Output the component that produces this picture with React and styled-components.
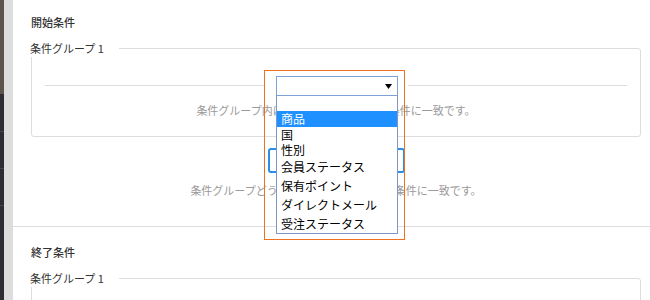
import React from "react";
import styled, { createGlobalStyle } from "styled-components";

const Global = createGlobalStyle`
  html, body { margin: 0; padding: 0; background: #fff; overflow: hidden; }
  body { font-family: "Noto Sans CJK JP", "Noto Sans", sans-serif; color: #333; }
  * { box-sizing: border-box; }
`;

const Shell = styled.div`
  display: flex;
  width: 650px;
  height: 300px;
  overflow: hidden;
`;

const Rail = styled.div`
  width: 4px;
  flex: none;
  display: flex;
  flex-direction: column;
  background: #2e2d33;
`;

const RailBlock = styled.div`
  flex: none;
  height: ${(p) => p.$h}px;
  background: ${(p) => (p.$brand ? "#5d544c" : "#2e2d33")};
  border-bottom: 1px solid ${(p) => (p.$brand ? "#5d544c" : "#46454c")};
`;

const Gutter = styled.div`
  width: 9px;
  flex: none;
  background: #dddddd;
`;

const Main = styled.main`
  flex: 1;
  background: #fff;
  display: flex;
  flex-direction: column;
`;

const Section = styled.section`
  position: relative;
  padding: ${(p) => p.$pt}px 9px ${(p) => p.$pb}px 18px;
  border-bottom: ${(p) => (p.$divided ? "1px solid #dddddd" : "none")};
`;

const Title = styled.h3`
  margin: 0;
  font-size: 11px;
  line-height: 16px;
  font-weight: 500;
  color: #333;
`;

const Group = styled.div`
  position: relative;
  margin-top: 18px;
  border: 1px solid #dddddd;
  border-radius: 3px;
  padding: 0 13px ${(p) => p.$pb}px;
  min-height: ${(p) => p.$minH || 0}px;
`;

const Legend = styled.span`
  position: absolute;
  top: -10px;
  left: -2px;
  font-size: 11px;
  line-height: 18px;
  color: #333;
  background: #fff;
  padding-right: 15px;
`;

const DividerRow = styled.div`
  display: flex;
  align-items: center;
  margin-top: 36px;
`;

const Rule = styled.div`
  flex: 1;
  height: 1px;
  background: #dddddd;
`;

const RuleSlot = styled.div`
  width: 143px;
  height: 1px;
  flex: none;
`;

const Note = styled.p`
  margin: ${(p) => p.$mt}px 0 0;
  text-align: center;
  font-size: 11px;
  line-height: 16px;
  color: #9a9a9a;
  white-space: nowrap;
`;

const ChoiceSlot = styled.span`
  display: inline-block;
  width: ${(p) => p.$w}px;
  height: 1px;
  vertical-align: middle;
`;

const AddButton = styled.button`
  display: block;
  margin: 11px auto 0;
  width: 137px;
  height: 25px;
  border: 2px solid #2a8ee6;
  border-radius: 3px;
  background: #fff;
  padding: 0;
`;

const Popup = styled.div`
  position: absolute;
  left: 251px;
  top: 70px;
  width: 141px;
  height: 170px;
  border: 1px solid #f07020;
  padding: 5px 0 0 11px;
`;

const SelectBox = styled.div`
  width: 122px;
  height: 20px;
  border: 1px solid #7fa1d6;
  background: #fff;
  display: flex;
  align-items: center;
  justify-content: flex-end;
  padding-right: 5px;
`;

const OptionList = styled.ul`
  list-style: none;
  margin: 0;
  padding: 0;
  width: 122px;
  border: 1px solid #7b98c9;
  border-top: none;
  background: #fff;
`;

const Option = styled.li`
  height: ${(p) => p.$h}px;
  line-height: ${(p) => p.$h}px;
  padding-left: 4px;
  font-size: 12px;
  color: ${(p) => (p.$active ? "#fff" : "#000")};
  background: ${(p) => (p.$active ? "#1e90ff" : "transparent")};
  white-space: nowrap;
`;

const options = [
  { label: "", h: 15 },
  { label: "商品", h: 16, active: true },
  { label: "国", h: 15 },
  { label: "性別", h: 15 },
  { label: "会員ステータス", h: 19 },
  { label: "保有ポイント", h: 19 },
  { label: "ダイレクトメール", h: 19 },
  { label: "受注ステータス", h: 19 },
];

const Arrow = () => (
  <svg width="7" height="5" viewBox="0 0 7 5">
    <polygon points="0,0 7,0 3.5,5" fill="#000" />
  </svg>
);

export default function App() {
  return (
    <>
      <Global />
      <Shell>
        <Rail>
          <RailBlock $brand $h={94} />
          <RailBlock $h={38} />
          <RailBlock $h={37} />
          <RailBlock $h={37} />
        </Rail>
        <Gutter />
        <Main>
          <Section $pt={14} $pb={28} $divided>
            <Title>開始条件</Title>
            <Group $pb={18}>
              <Legend>条件グループ 1</Legend>
              <DividerRow>
                <Rule />
                <RuleSlot />
                <Rule />
              </DividerRow>
              <Note $mt={16}>
                条件グループ内は<ChoiceSlot $w={105} />条件に一致です。
              </Note>
            </Group>
            <AddButton aria-label="条件グループを追加" />
            <Note $mt={9}>
              条件グループどうしは<ChoiceSlot $w={95} />条件に一致です。
            </Note>
            <Popup>
              <SelectBox>
                <Arrow />
              </SelectBox>
              <OptionList>
                {options.map((o, i) => (
                  <Option key={i} $h={o.h} $active={o.active}>
                    {o.label}
                  </Option>
                ))}
              </OptionList>
            </Popup>
          </Section>
          <Section $pt={17} $pb={0}>
            <Title>終了条件</Title>
            <Group $pb={18} $minH={80}>
              <Legend>条件グループ 1</Legend>
            </Group>
          </Section>
        </Main>
      </Shell>
    </>
  );
}
